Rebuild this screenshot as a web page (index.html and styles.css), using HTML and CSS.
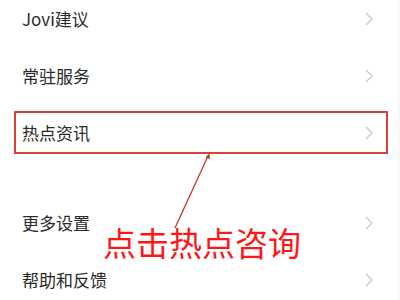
FILE: index.html
```html
<!DOCTYPE html>
<html>
<head>
<meta charset="utf-8">
<link rel="stylesheet" href="styles.css">
</head>
<body>
<div class="page">
  <div class="list">
    <div class="row"><span class="label">Jovi建议</span><svg class="chev" viewBox="0 0 8 14"><path d="M1 1 L7 7 L1 13"/></svg></div>
    <div class="row"><span class="label">常驻服务</span><svg class="chev" viewBox="0 0 8 14"><path d="M1 1 L7 7 L1 13"/></svg></div>
    <div class="row"><span class="label">热点资讯</span><svg class="chev" viewBox="0 0 8 14"><path d="M1 1 L7 7 L1 13"/></svg></div>
  </div>
  <div class="list gap">
    <div class="row"><span class="label">更多设置</span><svg class="chev" viewBox="0 0 8 14"><path d="M1 1 L7 7 L1 13"/></svg></div>
    <div class="row"><span class="label">帮助和反馈</span><svg class="chev" viewBox="0 0 8 14"><path d="M1 1 L7 7 L1 13"/></svg></div>
  </div>
  <div class="hl-box"></div>
  <svg class="arrow" viewBox="0 0 400 300" width="400" height="300">
    <line x1="175" y1="228" x2="208" y2="156"/>
    <path d="M205.5 157.5 L209.5 153 L210 159 Z" class="head"/>
  </svg>
  <div class="note">点击热点咨询</div>
</div>
</body>
</html>
```
FILE: styles.css
```css
html, body {
  margin: 0;
  padding: 0;
  background: #ffffff;
}
.page {
  position: relative;
  width: 400px;
  height: 300px;
  overflow: hidden;
  background: #ffffff;
  font-family: "Noto Sans CJK SC", "Noto Sans", sans-serif;
}
.page::after {
  content: "";
  position: absolute;
  right: 0;
  top: 0;
  width: 3px;
  height: 300px;
  background: #f7f7f5;
}
.list {
  display: flex;
  flex-direction: column;
  margin-top: -10px;
}
.list.gap {
  margin-top: 33px;
}
.row {
  height: 57px;
  display: flex;
  align-items: center;
  justify-content: space-between;
  padding: 0 27px 0 22px;
}
.label {
  font-size: 17px;
  color: #2a2a2a;
  letter-spacing: 0;
}
.chev {
  width: 8px;
  height: 14px;
  fill: none;
  stroke: #c6c6c6;
  stroke-width: 1.2;
}
.hl-box {
  position: absolute;
  left: 14px;
  top: 111px;
  width: 370px;
  height: 39px;
  border: 2px solid #d8403a;
}
.arrow {
  position: absolute;
  left: 0;
  top: 0;
}
.arrow line {
  stroke: #c8352f;
  stroke-width: 1.3;
}
.arrow .head {
  fill: #c8352f;
}
.note {
  position: absolute;
  left: 103px;
  top: 219px;
  font-size: 33px;
  line-height: 46px;
  color: #ff1616;
  letter-spacing: 0;
}
```
